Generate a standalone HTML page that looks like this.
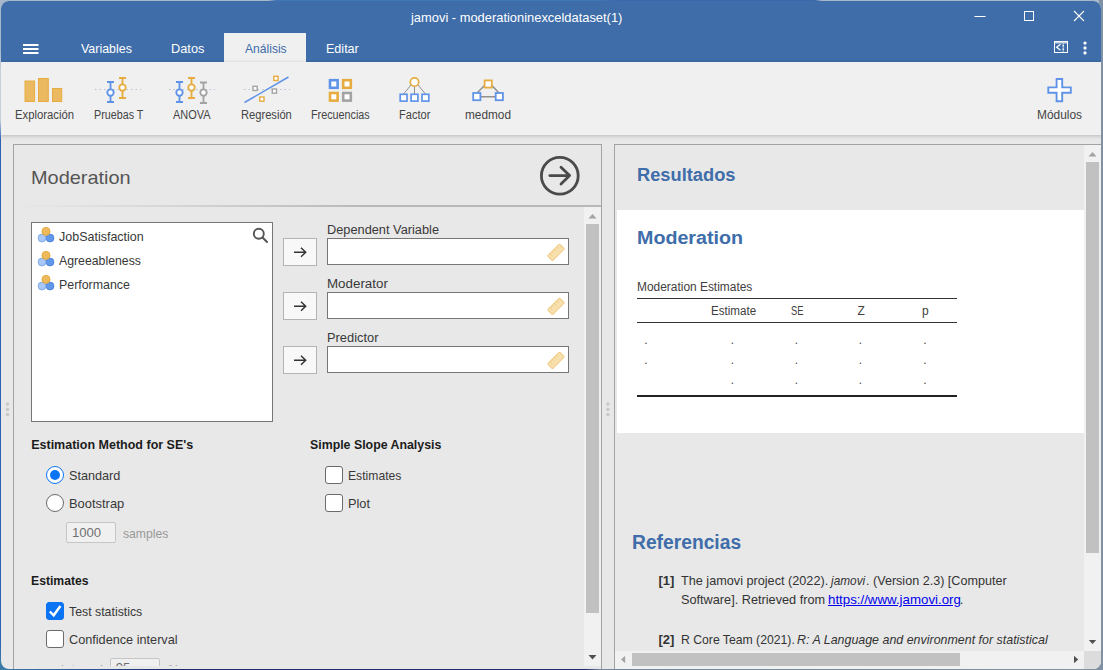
<!DOCTYPE html>
<html lang="es">
<head>
<meta charset="utf-8">
<title>jamovi - moderationinexceldataset(1)</title>
<style>
*{box-sizing:border-box;margin:0;padding:0}
html,body{width:1103px;height:670px;overflow:hidden}
body{background:#1b3a8c;font-family:"Liberation Sans",sans-serif;color:#333;position:relative}
.desk{position:absolute;left:0;top:0;width:1103px;height:670px;background:linear-gradient(180deg,#a9b8c8 0,#a9b8c8 50px,#c5d0dc 70px,#c5d0dc 120px,#2f62b5 140px,#2f62b5 640px,rgba(47,98,181,0) 660px) 0 0/3px 670px no-repeat,linear-gradient(90deg,rgba(0,0,0,0) 0,rgba(0,0,0,0) 1099px,#8191a5 1099px),linear-gradient(90deg,#a9b8c8 0,#a9b8c8 268px,#3f76b6 276px,#3f76b6 600px,#3a68ad 620px,#3a68ad 815px,#a9b8c8 822px,#a9b8c8 1103px) 0 0/1103px 4px no-repeat,linear-gradient(90deg,#3c7aa8 0,#2a4f8e 100px,#1b2b6c 160px,#1b2b6c 585px,#71879f 600px,#8191a5 1103px)}
.win{position:absolute;left:1px;top:1px;width:1100px;height:667.500px;background:#e8e8e8;border-radius:8px;overflow:hidden}
.cv{position:absolute;left:-1px;top:-1px;width:1103px;height:670px}
.abs{position:absolute}
.clip{position:absolute;overflow:hidden}
.t{position:absolute;white-space:nowrap;line-height:1;transform-origin:0 50%}
.titlebar{position:absolute;left:0;top:0;width:1103px;height:62px;background:#3e6da9}
.title{color:#fff}
.tab{color:#fff}
.tab.act{color:#3e6da9}
.acttab{position:absolute;left:224px;top:33px;width:82px;height:30px;background:#f0f0f0}
.ribbon{position:absolute;left:0;top:62px;width:1103px;height:73px;background:#f0f0f0;box-shadow:0 1px 4px rgba(0,0,0,.2)}
.rl{color:#444}
.opts{position:absolute;left:13px;top:144px;width:589px;height:540px;border:1px solid #a3a3a3;background:#e8e8e8}
.ptitle{color:#555}
.lbl{color:#383838}
.dim{color:#707070}
.dim2{color:#9a9a9a}
.bold{font-weight:bold;color:#1c1c1c}
.box{position:absolute;background:#fff;border:1px solid #767676}
.btn{position:absolute;background:#f8f8f8;border:1px solid #b4b4b4}
.cb{position:absolute;width:18px;height:18px;background:#fff;border:1px solid #6b6b6b;border-radius:3px}
.cb.on{background:#0a74f5;border-color:#0a74f5}
.rd{position:absolute;width:18px;height:18px;background:#fff;border:1px solid #6b6b6b;border-radius:50%}
.rd.on{border:1.500px solid #0a74f5}
.rd.on::after{content:"";position:absolute;left:2.500px;top:2.500px;width:10px;height:10px;border-radius:50%;background:#0a74f5}
.res{position:absolute;left:614px;top:144px;width:490px;height:540px;border-left:1px solid #a3a3a3;border-top:1px solid #a3a3a3;background:#e8e8e8}
.h1{font-weight:bold;color:#3e6da9}
.tbl{color:#404040}
.ref{color:#333}
.refn{font-weight:bold}
.lnk{color:#0000ee;text-decoration:underline}
.trk{position:absolute;background:#f1f1f1}
.thumb{position:absolute;background:#c1c1c1}
.ln{position:absolute;background:#333}
</style>
</head>
<body>
<div class="desk"></div>
<div class="win"><div class="cv">

<!-- TITLE BAR + TABS -->
<div class="titlebar"></div>
<svg class="abs" style="left:960px;top:0" width="143" height="33" viewBox="960 0 143 33">
  <path d="M974.500 16.500h11" stroke="#fff" stroke-width="1" fill="none"/>
  <rect x="1024.500" y="11.500" width="9" height="9" stroke="#fff" stroke-width="1" fill="none"/>
  <path d="M1074 11l10 10M1084 11l-10 10" stroke="#fff" stroke-width="1.100" fill="none"/>
</svg>
<svg class="abs" style="left:20px;top:40px" width="22" height="16" viewBox="20 40 22 16">
  <path d="M23 45h15.500M23 49h15.500M23 53h15.500" stroke="#fff" stroke-width="1.800" fill="none"/>
</svg>
<div class="acttab"></div>
<svg class="abs" style="left:1050px;top:38px" width="44" height="20" viewBox="1050 38 44 20">
  <rect x="1054.500" y="41.500" width="13" height="11" fill="none" stroke="#fff" stroke-width="1"/>
  <rect x="1055" y="42" width="12" height="1.500" fill="#fff" fill-opacity=".7"/>
  <path d="M1060.500 44.300L1056.700 47.300L1060.500 50.300" stroke="#fff" stroke-width="1.300" fill="none"/>
  <rect x="1062.600" y="43" width="1.200" height="9" fill="#fff" fill-opacity=".55"/>
  <rect x="1062.600" y="45" width="1.200" height="1.500" fill="#fff"/><rect x="1062.600" y="48.500" width="1.200" height="1.500" fill="#fff"/>
  <circle cx="1085" cy="43.100" r="1.650" fill="#fff"/><circle cx="1085" cy="48" r="1.650" fill="#fff"/><circle cx="1085" cy="52.900" r="1.650" fill="#fff"/>
</svg>

<div class="t title" id="title" style="left:410.90px;top:11.00px;font-size:13px;transform:scaleX(0.9915);">jamovi - moderationinexceldataset(1)</div>
<div class="t tab" id="tab1" style="left:80.90px;top:42.07px;font-size:13.5px;transform:scaleX(0.9200);">Variables</div>
<div class="t tab" id="tab2" style="left:171.00px;top:42.07px;font-size:13.5px;transform:scaleX(0.9471);">Datos</div>
<div class="t tab act" id="tab3" style="left:244.60px;top:42.07px;font-size:13.5px;transform:scaleX(0.8957);">Análisis</div>
<div class="t tab" id="tab4" style="left:326.00px;top:42.07px;font-size:13.5px;transform:scaleX(0.9295);">Editar</div>

<!-- RIBBON -->
<div class="ribbon"></div>
<svg class="abs" style="left:0;top:62px" width="1103" height="73" viewBox="0 62 1103 73">
  <g fill="#ebb95f" stroke="#e6ac40" stroke-width="1">
    <rect x="25" y="81" width="9.600" height="20.500"/>
    <rect x="38.500" y="78.500" width="9.800" height="23"/>
    <rect x="52.500" y="88.500" width="9.200" height="13"/>
  </g>
  <path d="M95 89.500H141" stroke="#b5c3d8" stroke-width="1" stroke-dasharray="1.500 3" fill="none"/>
  <g fill="none" stroke="#5f93e8" stroke-width="1.850">
    <path d="M110.500 82V102M107 82h7M107 102h7"/><circle cx="110.500" cy="92.500" r="3.200" fill="#fff"/>
  </g>
  <g fill="none" stroke="#e6ac40" stroke-width="1.850">
    <path d="M122.500 78V98M119 78h7M119 98h7"/><circle cx="122.500" cy="87.500" r="3.200" fill="#fff"/>
  </g>
  <path d="M169 89.500H215" stroke="#b5c3d8" stroke-width="1" stroke-dasharray="1.500 3" fill="none"/>
  <g fill="none" stroke="#5f93e8" stroke-width="1.850">
    <path d="M179.500 82V102M176 82h7M176 102h7"/><circle cx="179.500" cy="92.500" r="3.200" fill="#fff"/>
  </g>
  <g fill="none" stroke="#e6ac40" stroke-width="1.850">
    <path d="M191.500 78V98M188 78h7M188 98h7"/><circle cx="191.500" cy="87.500" r="3.200" fill="#fff"/>
  </g>
  <g fill="none" stroke="#a3a3a3" stroke-width="1.850">
    <path d="M203.500 82.500V103M200 82.500h7M200 103h7"/><circle cx="203.500" cy="92.500" r="3.200" fill="#fff"/>
  </g>
  <path d="M244 89.500H290" stroke="#b5c3d8" stroke-width="1" stroke-dasharray="1.500 3" fill="none"/>
  <path d="M244.500 102.500L288.500 77" stroke="#5f93e8" stroke-width="1.500" fill="none"/>
  <g fill="#fff" stroke-width="1.400">
    <rect x="273.800" y="76.300" width="4.200" height="4.200" stroke="#e6ac40"/>
    <rect x="259.800" y="97" width="4.200" height="4.200" stroke="#e6ac40"/>
    <rect x="253" y="86.300" width="4.200" height="4.200" stroke="#a3a3a3"/>
    <rect x="272.300" y="89" width="4.200" height="4.200" stroke="#a3a3a3"/>
  </g>
  <g fill="#fff" stroke-width="2.600">
    <rect x="330" y="80.200" width="7.600" height="7.600" stroke="#5f93e8"/>
    <rect x="343.200" y="80.200" width="7.600" height="7.600" stroke="#e6ac40"/>
    <rect x="330" y="93" width="7.600" height="7.600" stroke="#e6ac40"/>
    <rect x="343.200" y="93" width="7.600" height="7.600" stroke="#a3a3a3"/>
  </g>
  <g fill="none" stroke="#909090" stroke-width="1">
    <path d="M414.500 82V94M411 85L403.500 94M418 85L425.500 94"/>
  </g>
  <circle cx="414.500" cy="82" r="4.200" fill="#fff" stroke="#e6ac40" stroke-width="1.700"/>
  <g fill="#fff" stroke="#5f93e8" stroke-width="1.700">
    <rect x="400.200" y="94.300" width="6.800" height="6.800"/>
    <rect x="411.100" y="94.300" width="6.800" height="6.800"/>
    <rect x="422" y="94.300" width="6.800" height="6.800"/>
  </g>
  <g fill="none" stroke="#909090" stroke-width="1.500">
    <path d="M477 96.700H499M477 93L485 85M499 93L491.500 85"/>
  </g>
  <rect x="484.600" y="80.400" width="7.200" height="7.200" fill="#fff" stroke="#e6ac40" stroke-width="1.800"/>
  <g fill="#fff" stroke="#5f93e8" stroke-width="1.800">
    <rect x="473.200" y="93" width="7.200" height="7.200"/>
    <rect x="495.700" y="93" width="7.200" height="7.200"/>
  </g>
  <path d="M1056.600 79H1062.200V87.400H1070.800V92.800H1062.200V101.200H1056.600V92.800H1048.300V87.400H1056.600Z" fill="#fff" stroke="#5f93e8" stroke-width="1.900" stroke-linejoin="miter"/>
</svg>

<div class="t rl" id="rl1" style="left:15.20px;top:108.84px;font-size:12px;transform:scaleX(0.9409);">Exploración</div>
<div class="t rl" id="rl2" style="left:93.60px;top:108.84px;font-size:12px;transform:scaleX(0.8967);">Pruebas T</div>
<div class="t rl" id="rl3" style="left:172.80px;top:108.84px;font-size:12px;transform:scaleX(0.9122);">ANOVA</div>
<div class="t rl" id="rl4" style="left:240.50px;top:108.84px;font-size:12px;transform:scaleX(0.9283);">Regresión</div>
<div class="t rl" id="rl5" style="left:311.20px;top:108.84px;font-size:12px;transform:scaleX(0.8988);">Frecuencias</div>
<div class="t rl" id="rl6" style="left:398.80px;top:108.84px;font-size:12px;transform:scaleX(0.9213);">Factor</div>
<div class="t rl" id="rl7" style="left:465.40px;top:108.84px;font-size:12px;transform:scaleX(0.9851);">medmod</div>
<div class="t rl" id="rl8" style="left:1036.60px;top:108.84px;font-size:12px;transform:scaleX(0.9933);">Módulos</div>

<!-- OPTIONS PANEL -->
<div class="opts"></div>
<!-- left splitter dots -->
<svg class="abs" style="left:4px;top:398px" width="8" height="22" viewBox="4 398 8 22">
  <circle cx="7.500" cy="404" r="1.800" fill="#c9c9c9"/><circle cx="7.500" cy="409.200" r="1.800" fill="#c9c9c9"/><circle cx="7.500" cy="414.500" r="1.800" fill="#c9c9c9"/>
</svg>
<!-- header divider -->
<div class="abs" style="left:14px;top:205px;width:587px;height:2px;background:linear-gradient(90deg,rgba(184,184,184,0) 0,rgba(184,184,184,.35) 25%,#b8b8b8 60%)"></div>
<!-- run arrow -->
<svg class="abs" style="left:536px;top:152px" width="48" height="48" viewBox="536 152 48 48">
  <circle cx="559.800" cy="175.700" r="18.400" fill="none" stroke="#4a4a4a" stroke-width="2.800"/>
  <path d="M549.800 175.600H569.500M561 167.200L569.600 175.600L561 184" fill="none" stroke="#4a4a4a" stroke-width="2.800" stroke-linecap="round" stroke-linejoin="round"/>
</svg>
<!-- scrollbar -->
<div class="trk" style="left:584px;top:207px;width:17px;height:459px"></div>
<div class="thumb" style="left:586px;top:224px;width:13px;height:389px"></div>
<svg class="abs" style="left:584px;top:207px" width="17" height="460" viewBox="584 207 17 460">
  <path d="M588.500 218.500L592.500 214L596.500 218.500Z" fill="#a3a3a3"/>
  <path d="M588.500 655L592.500 659.500L596.500 655Z" fill="#505050"/>
</svg>
<div class="clip" style="left:14px;top:207px;width:570px;height:459px"><div class="abs" style="left:-14px;top:-207px;width:600px;height:700px">
<!-- variable list -->
<div class="box" style="left:31px;top:222px;width:242px;height:200px"></div>
<svg class="abs" style="left:36px;top:224px" width="20" height="72" viewBox="36 224 20 72">
  <g id="vi">
    <circle cx="50" cy="238" r="3.900" fill="#6397ea" stroke="#4f86e2" stroke-width="1"/>
    <circle cx="42" cy="238" r="3.900" fill="#a9c8f5" stroke="#7fabef" stroke-width="1"/>
    <circle cx="46" cy="231.400" r="4" fill="#eebb5c" stroke="#e2a83f" stroke-width="1"/>
  </g>
  <use href="#vi" y="24"/><use href="#vi" y="48"/>
</svg>
<svg class="abs" style="left:250px;top:225px" width="22" height="22" viewBox="250 225 22 22">
  <circle cx="258.800" cy="233.800" r="5" fill="none" stroke="#555" stroke-width="1.900"/>
  <path d="M262.500 237.500L267 242" stroke="#555" stroke-width="2" stroke-linecap="round"/>
</svg>
<!-- arrow buttons + targets -->
<div class="btn" style="left:283px;top:238px;width:34px;height:28px"></div>
<div class="btn" style="left:283px;top:292px;width:34px;height:28px"></div>
<div class="btn" style="left:283px;top:346px;width:34px;height:28px"></div>
<svg class="abs" style="left:283px;top:238px" width="34" height="136" viewBox="283 238 34 136">
  <g id="ar" fill="none" stroke="#333" stroke-width="1.450"><path d="M294 252.300H305.500M301 247.800L305.700 252.300L301 256.800"/></g>
  <use href="#ar" y="54"/><use href="#ar" y="108"/>
</svg>
<div class="box" style="left:327px;top:238px;width:242px;height:27px"></div>
<div class="box" style="left:327px;top:292px;width:242px;height:27px"></div>
<div class="box" style="left:327px;top:346px;width:242px;height:27px"></div>
<svg class="abs" style="left:544px;top:240px" width="24" height="132" viewBox="544 240 24 132">
  <g id="ru" transform="rotate(-45 556 252.300)">
    <rect x="547.500" y="248.800" width="17" height="7" rx="1" fill="#f8dfae" stroke="#f0cc86" stroke-width="1"/>
    <path d="M551 249v3M554 249v2M557 249v3M560 249v2" stroke="#eec57a" stroke-width=".8" fill="none"/>
  </g>
  <use href="#ru" y="54"/><use href="#ru" y="108"/>
</svg>
<!-- radios -->
<div class="rd on" style="left:46px;top:466px"></div>
<div class="rd" style="left:46px;top:494px"></div>
<div class="abs" style="left:66px;top:522px;width:50px;height:21px;background:#f0f0f0;border:1px solid #c6c6c6;border-radius:2px"></div>
<!-- checkboxes -->
<div class="cb" style="left:325px;top:466px"></div>
<div class="cb" style="left:325px;top:494px"></div>
<div class="cb on" style="left:46px;top:602px"></div>
<svg class="abs" style="left:46px;top:602px" width="18" height="18" viewBox="46 602 18 18">
  <path d="M49.800 611.500L53.700 615.300L60.400 606" fill="none" stroke="#fff" stroke-width="2.400"/>
</svg>
<div class="cb" style="left:46px;top:630px"></div>
<div class="abs" style="left:110px;top:658px;width:50px;height:21px;background:#f0f0f0;border:1px solid #c6c6c6;border-radius:2px"></div>
</div></div>

<div class="clip" style="left:14px;top:207px;width:571px;height:459px"><div class="abs" style="left:-14px;top:-207px">
<div class="t lbl" id="v1" style="left:59.40px;top:229.80px;font-size:13px;transform:scaleX(0.9609);">JobSatisfaction</div>
<div class="t lbl" id="v2" style="left:59.40px;top:253.80px;font-size:13px;transform:scaleX(0.9448);">Agreeableness</div>
<div class="t lbl" id="v3" style="left:59.10px;top:277.80px;font-size:13px;transform:scaleX(0.9534);">Performance</div>
<div class="t lbl" id="l1" style="left:326.90px;top:224.12px;font-size:12.5px;transform:scaleX(1.0223);">Dependent Variable</div>
<div class="t lbl" id="l2" style="left:326.90px;top:277.92px;font-size:12.5px;transform:scaleX(1.0679);">Moderator</div>
<div class="t lbl" id="l3" style="left:326.90px;top:331.92px;font-size:12.5px;transform:scaleX(1.0286);">Predictor</div>
<div class="t bold" id="b1" style="left:31.20px;top:439.02px;font-size:12.5px;">Estimation Method for SE's</div>
<div class="t bold" id="b2" style="left:310.30px;top:438.72px;font-size:12.5px;transform:scaleX(0.9879);">Simple Slope Analysis</div>
<div class="t lbl" id="r1" style="left:68.60px;top:468.80px;font-size:13px;transform:scaleX(0.9726);">Standard</div>
<div class="t lbl" id="r2" style="left:68.60px;top:496.90px;font-size:13px;transform:scaleX(0.9928);">Bootstrap</div>
<div class="t lbl dim" id="n1" style="left:71.60px;top:526.00px;font-size:13px;transform:scaleX(1.0076);">1000</div>
<div class="t lbl dim2" id="n2" style="left:122.60px;top:526.80px;font-size:13px;transform:scaleX(0.9372);">samples</div>
<div class="t lbl" id="c1" style="left:348.10px;top:469.20px;font-size:13px;transform:scaleX(0.9347);">Estimates</div>
<div class="t lbl" id="c2" style="left:348.10px;top:497.20px;font-size:13px;transform:scaleX(0.9820);">Plot</div>
<div class="t bold" id="b3" style="left:30.70px;top:575.12px;font-size:12.5px;transform:scaleX(0.9759);">Estimates</div>
<div class="t lbl" id="c3" style="left:69.40px;top:604.60px;font-size:13px;transform:scaleX(0.9481);">Test statistics</div>
<div class="t lbl" id="c4" style="left:69.40px;top:632.70px;font-size:13px;transform:scaleX(0.9755);">Confidence interval</div>
<div class="t lbl dim2" id="c5" style="left:61.00px;top:663.30px;font-size:13px;">interval</div>
<div class="t lbl dim" id="n3" style="left:115.70px;top:661.00px;font-size:13px;">95</div>
<div class="t lbl dim2" id="c6" style="left:168.00px;top:663.30px;font-size:13px;">%</div>
</div></div>
<div class="t ptitle" id="ptitle" style="left:30.70px;top:169.44px;font-size:18.5px;transform:scaleX(1.0769);">Moderation</div>

<!-- RESULTS PANEL -->
<div class="res"></div>
<!-- middle splitter dots -->
<svg class="abs" style="left:604px;top:398px" width="8" height="22" viewBox="604 398 8 22">
  <circle cx="607.900" cy="404" r="1.800" fill="#c9c9c9"/><circle cx="607.900" cy="409.200" r="1.800" fill="#c9c9c9"/><circle cx="607.900" cy="414.500" r="1.800" fill="#c9c9c9"/>
</svg>
<div class="abs" style="left:617px;top:210px;width:467px;height:223px;background:#fff"></div>
<div class="ln" style="left:637px;top:298px;width:320px;height:1px"></div>
<div class="ln" style="left:637px;top:322px;width:320px;height:1px"></div>
<div class="ln" style="left:637px;top:395px;width:320px;height:2px;background:#222"></div>
<!-- scrollbars -->
<div class="trk" style="left:1084px;top:145px;width:18px;height:506px"></div>
<div class="thumb" style="left:1086px;top:162px;width:13px;height:391px"></div>
<div class="trk" style="left:615px;top:651px;width:469px;height:19px"></div>
<div class="thumb" style="left:632px;top:653px;width:328px;height:13px"></div>
<div class="abs" style="left:1084px;top:651px;width:19px;height:19px;background:#dcdcdc"></div>
<svg class="abs" style="left:615px;top:145px" width="488" height="525" viewBox="615 145 488 525">
  <path d="M1088.500 156.500L1092.500 152L1096.500 156.500Z" fill="#a3a3a3"/>
  <path d="M1088.800 640L1092.500 644L1096.200 640Z" fill="#505050"/>
  <path d="M625.200 655.800L621 659.500L625.200 663.200Z" fill="#a3a3a3"/>
  <path d="M1074 655.800L1078.200 659.500L1074 663.200Z" fill="#505050"/>
</svg>

<div class="t h1" id="h1" style="left:636.90px;top:165.56px;font-size:18px;transform:scaleX(1.0148);">Resultados</div>
<div class="t h1" id="h2" style="left:636.90px;top:229.26px;font-size:18px;transform:scaleX(1.0929);">Moderation</div>
<div class="t tbl" id="tt" style="left:636.70px;top:280.84px;font-size:12px;transform:scaleX(0.9935);">Moderation Estimates</div>
<div class="t tbl" id="th1" style="left:710.70px;top:304.84px;font-size:12px;transform:scaleX(0.9670);">Estimate</div>
<div class="t tbl" id="th2" style="left:791.10px;top:304.84px;font-size:12px;transform:scaleX(0.7812);">SE</div>
<div class="t tbl" id="th3" style="left:857.50px;top:304.84px;font-size:12px;">Z</div>
<div class="t tbl" id="th4" style="left:922.00px;top:304.84px;font-size:12px;">p</div>
<div class="t h1" id="h3" style="left:631.60px;top:533.39px;font-size:19.5px;transform:scaleX(0.9868);">Referencias</div>
<div class="t ref refn" id="rf1n" style="left:658.40px;top:573.90px;font-size:13px;">[1]</div>
<div class="t ref" id="rf1a1" style="left:681.40px;top:573.90px;font-size:13px;transform:scaleX(0.9747);">The jamovi project (2022).</div>
<div class="t ref" id="rf1a2" style="left:830.80px;top:573.90px;font-size:13px;transform:scaleX(0.9104);"><i>jamovi</i></div>
<div class="t ref" id="rf1a3" style="left:866.40px;top:573.90px;font-size:13px;transform:scaleX(0.9681);">. (Version 2.3) [Computer</div>
<div class="t ref" id="rf1b1" style="left:681.40px;top:593.00px;font-size:13px;transform:scaleX(0.9780);">Software]. Retrieved from</div>
<div class="t ref" id="rf1b2" style="left:827.70px;top:593.00px;font-size:13px;transform:scaleX(1.0219);"><span class="lnk">https://www.jamovi.org</span></div>
<div class="t ref" id="rf1b3" style="left:959.70px;top:593.00px;font-size:13px;">.</div>
<div class="t ref" id="rf2a1" style="left:681.40px;top:632.80px;font-size:13px;transform:scaleX(0.9395);">R Core Team (2021).</div>
<div class="t ref" id="rf2a2" style="left:797.40px;top:632.80px;font-size:13px;transform:scaleX(0.9565);"><i>R: A Language and environment for statistical</i></div>
<div class="t ref refn" id="rf2n" style="left:658.40px;top:632.80px;font-size:13px;">[2]</div>
<div class="t tbl" id="d00" style="left:644.20px;top:333.94px;font-size:12px;">.</div>
<div class="t tbl" id="d01" style="left:730.80px;top:333.94px;font-size:12px;">.</div>
<div class="t tbl" id="d02" style="left:794.70px;top:333.94px;font-size:12px;">.</div>
<div class="t tbl" id="d03" style="left:858.80px;top:333.94px;font-size:12px;">.</div>
<div class="t tbl" id="d04" style="left:923.20px;top:333.94px;font-size:12px;">.</div>
<div class="t tbl" id="d10" style="left:644.20px;top:353.84px;font-size:12px;">.</div>
<div class="t tbl" id="d11" style="left:730.80px;top:353.84px;font-size:12px;">.</div>
<div class="t tbl" id="d12" style="left:794.70px;top:353.84px;font-size:12px;">.</div>
<div class="t tbl" id="d13" style="left:858.80px;top:353.84px;font-size:12px;">.</div>
<div class="t tbl" id="d14" style="left:923.20px;top:353.84px;font-size:12px;">.</div>
<div class="t tbl" id="d21" style="left:730.80px;top:373.84px;font-size:12px;">.</div>
<div class="t tbl" id="d22" style="left:794.70px;top:373.84px;font-size:12px;">.</div>
<div class="t tbl" id="d23" style="left:858.80px;top:373.84px;font-size:12px;">.</div>
<div class="t tbl" id="d24" style="left:923.20px;top:373.84px;font-size:12px;">.</div>

</div></div>
</body>
</html>
